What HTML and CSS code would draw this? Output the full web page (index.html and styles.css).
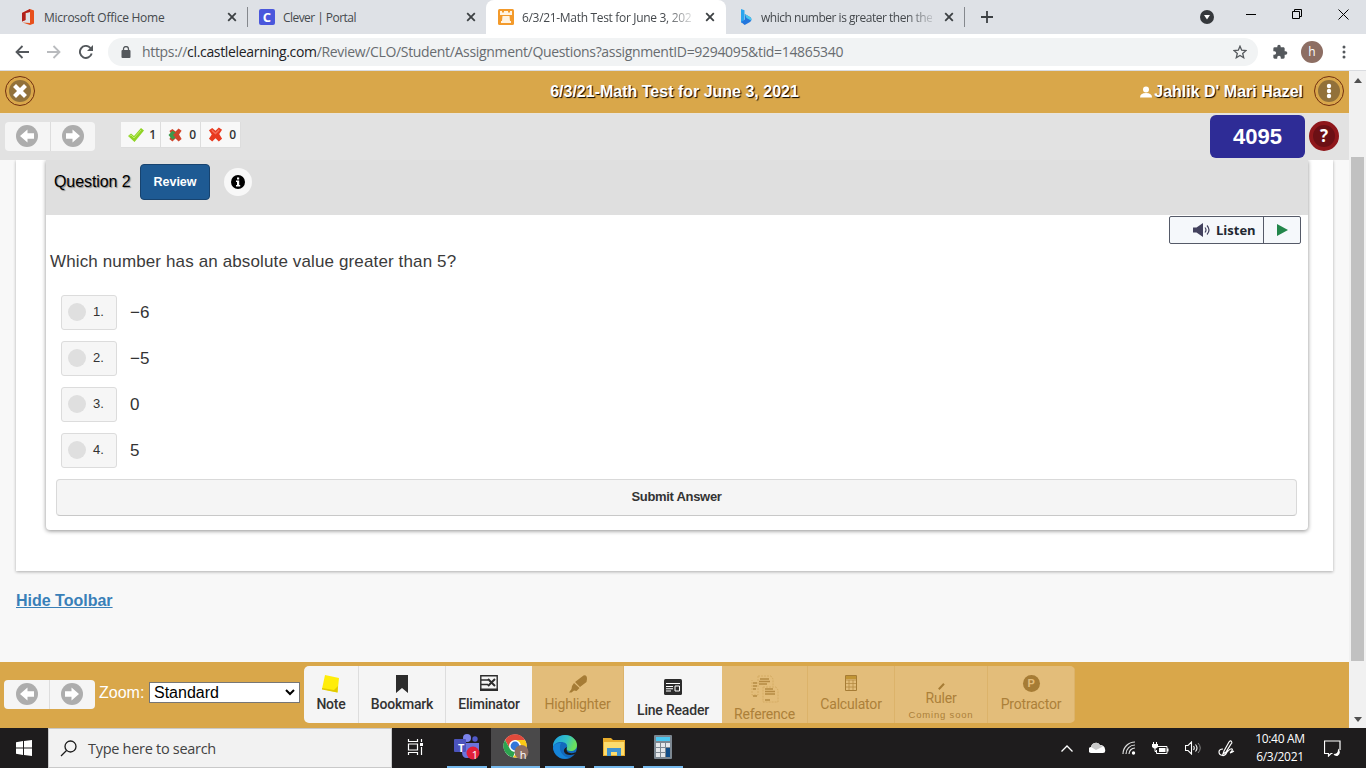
FILE: index.html
```html
<!DOCTYPE html>
<html lang="en">
<head>
  <meta charset="UTF-8">
  <meta name="viewport" content="width=device-width, initial-scale=1.0">
  <title>6/3/21-Math Test for June 3, 2021</title>
  <link rel="stylesheet" href="styles.css">
</head>
<body>
  <svg class="defs" width="0" height="0">
    <symbol id="close" viewBox="0 0 10 10"><path d="M1.2 1.2l7.6 7.6M8.8 1.2L1.2 8.8" stroke="#3c4043" stroke-width="1.8"/></symbol>
    <symbol id="arrow" viewBox="0 0 22 22">
      <circle cx="11" cy="11" r="11" fill="#adadad"/>
      <path d="M4 11l7.500-6.500V8.300H18v5.400h-6.500v3.800z" fill="#fff"/>
    </symbol>
    <symbol id="cross" viewBox="0 0 16 16"><path d="M1 3.500L4.500 1 8 4l3.500-3.500L15 3l-3 4.500 3 5-3.500 3L8 12l-3.500 3.500L1 12.500l3-4.500z"/></symbol>
  </svg>

  <div class="tabs">
    <div class="tab">
      <svg width="16" height="16" viewBox="0 0 16 16"><path d="M10 0l4 1.500v13L10 16l-7.500-2.500L10 14V3L5.500 4v7L2 12.500V4z" fill="#e8501c"/><path d="M10 0L2 4v8.500L5.500 11V4L10 3z" fill="#b0201c"/></svg>
      <span class="name office">Microsoft Office Home</span>
      <svg class="x" width="10" height="10"><use href="#close"/></svg>
    </div>
    <div class="tab second">
      <span class="clever">C</span>
      <span class="name clever-name">Clever | Portal</span>
      <svg class="x" width="10" height="10"><use href="#close"/></svg>
    </div>
    <div class="tab active">
      <svg width="16" height="16" viewBox="0 0 16 16"><rect width="16" height="16" rx="1.500" fill="#f39a2b"/><path d="M2 2h2v1.500h2V2h4v1.500h2V2h2v4H2zM4.500 7h7l.5 5h1v2H3v-2h1z" fill="#fff3e2"/></svg>
      <span class="name math fade">6/3/21-Math Test for June 3, 202</span>
      <svg class="x" width="10" height="10"><use href="#close"/></svg>
    </div>
    <div class="tab bing">
      <svg width="16" height="16" viewBox="0 0 16 16"><path d="M3 0l3.500 1.200V11L3 14z" fill="#2aa5ee"/><path d="M3 13l4-2.500L6.800 5l5.200 3c2.200 1.500 1.700 4 0 5l-5.300 3z" fill="#2376dd"/><path d="M6.800 5l5.200 3c1.500 1 1.500 2.500 1 3.500L8.500 9z" fill="#4bc8ed"/></svg>
      <span class="name which fade">which number is greater then the</span>
      <svg class="x" width="10" height="10"><use href="#close"/></svg>
    </div>
    <svg class="plus" width="12" height="12" viewBox="0 0 12 12"><path d="M6 0v12M0 6h12" stroke="#3c4043" stroke-width="1.800"/></svg>
    <div class="window-buttons">
      <svg width="14" height="14" viewBox="0 0 14 14"><circle cx="7" cy="7" r="7" fill="#35383c"/><path d="M4 5h6L7 9.500z" fill="#fff"/></svg>
      <svg class="min" width="10" height="10" viewBox="0 0 10 10"><path d="M0 4.500h10" stroke="#000"/></svg>
      <svg class="max" width="10" height="10" viewBox="0 0 10 10"><path d="M.5 2.500h7v7h-7zM2.500 2.500v-2h7v7h-2" fill="none" stroke="#000"/></svg>
      <svg class="quit" width="11" height="11" viewBox="0 0 11 11"><path d="M.5.5l10 10M10.500.5l-10 10" stroke="#000"/></svg>
    </div>
  </div>

  <div class="address-bar">
    <svg class="nav" width="14" height="14" viewBox="0 0 14 14"><path d="M14 7H1.500M7.500 1l-6 6 6 6" fill="none" stroke="#54585c" stroke-width="1.800"/></svg>
    <svg class="nav" width="14" height="14" viewBox="0 0 14 14"><path d="M0 7h12.500M6.500 1l6 6-6 6" fill="none" stroke="#b9bbbe" stroke-width="1.800"/></svg>
    <svg class="nav" width="14" height="14" viewBox="0 0 14 14"><path d="M12.700 8.500A6 6 0 1 1 11.300 2.800L13 4.500" fill="none" stroke="#54585c" stroke-width="1.900"/><path d="M14 0v6H8z" fill="#54585c"/></svg>
    <div class="omnibox">
      <svg width="10" height="12" viewBox="0 0 10 12"><rect x="0.500" y="4" width="9" height="8" rx="1" fill="#54585c"/><path d="M2.500 4.500V3a2.500 2.500 0 0 1 5 0v1.500" fill="none" stroke="#54585c" stroke-width="1.300"/></svg>
      <span class="url">https://<b>cl.castlelearning.com</b>/Review/CLO/Student/Assignment/Questions?assignmentID=9294095&amp;tid=14865340</span>
      <svg class="star" width="14" height="14" viewBox="0 0 14 14"><path d="M7 1.200l1.700 4 4.300.4-3.300 2.800 1 4.300L7 10.400l-3.700 2.300 1-4.300L1 5.600l4.300-.4z" fill="none" stroke="#54585c" stroke-width="1.300"/></svg>
    </div>
    <svg class="puzzle" width="16" height="16" viewBox="0 0 24 24"><path d="M20.500 11H19V7c0-1.100-.9-2-2-2h-4V3.500a2.500 2.500 0 0 0-5 0V5H4a2 2 0 0 0-2 2v3.800h1.500a2.700 2.700 0 0 1 0 5.400H2V20c0 1.100.9 2 2 2h3.800v-1.500a2.700 2.700 0 0 1 5.400 0V22H17a2 2 0 0 0 2-2v-4h1.500a2.500 2.500 0 0 0 0-5z" fill="#54585c"/></svg>
    <span class="avatar">h</span>
    <svg width="4" height="14" viewBox="0 0 4 14" fill="#54585c"><circle cx="2" cy="2" r="1.500"/><circle cx="2" cy="7" r="1.500"/><circle cx="2" cy="12" r="1.500"/></svg>
  </div>

  <div class="viewport">
    <div class="page">
      <div class="header">
        <div class="ring"><svg width="22" height="22" viewBox="0 0 22 22"><circle cx="11" cy="11" r="11" fill="#92713a"/><path d="M7 7l8 8M15 7l-8 8" stroke="#fff" stroke-width="4.200" stroke-linecap="square"/></svg></div>
        <h1>6/3/21-Math Test for June 3, 2021</h1>
        <div class="user">
          <svg width="12" height="12" viewBox="0 0 12 12"><circle cx="6" cy="3.500" r="3" fill="#fff"/><path d="M0 11.500c0-3 2-4.500 6-4.500s6 1.500 6 4.500z" fill="#fff"/></svg>
          <span>Jahlik D' Mari Hazel</span>
          <div class="ring"><svg width="22" height="22" viewBox="0 0 22 22"><circle cx="11" cy="11" r="11" fill="#92713a"/><g fill="#fff"><circle cx="11" cy="6" r="2.200"/><circle cx="11" cy="11" r="2.200"/><circle cx="11" cy="16" r="2.200"/></g></svg></div>
        </div>
      </div>

      <div class="subheader">
        <div class="arrows">
          <span><svg width="22" height="22"><use href="#arrow"/></svg></span>
          <span><svg class="flip" width="22" height="22"><use href="#arrow"/></svg></span>
        </div>
        <div class="scores">
          <span><svg width="16" height="14" viewBox="0 0 16 14"><path d="M0 8l3-2.500 3 2.500 7-8 3 2.500L6.500 14z" fill="#8fd325"/><path d="M1.500 8L3 7l3 3 7-8" fill="none" stroke="#c0ee68"/></svg>1</span>
          <span><svg width="15" height="14" viewBox="0 0 16 16"><use href="#cross" fill="#d0452b"/><path d="M0 8l4.500-5L8 5 7 8l1 3-3.500 2.500z" fill="#3d9a4b"/><path d="M6 7l6 6" stroke="#d0452b" stroke-width="2.500"/></svg>0</span>
          <span><svg width="15" height="15" viewBox="0 0 16 16"><use href="#cross" fill="#e83a1f"/><path d="M4 3.500l4 3.500 4-4" fill="none" stroke="#f5705a" stroke-width="1.500"/></svg>0</span>
        </div>
        <div class="code">4095</div>
        <div class="help">?</div>
      </div>

      <div class="content">
        <div class="sheet">
          <div class="question">
            <div class="question-head">
              <span class="number">Question 2</span>
              <span class="review">Review</span>
              <span class="info"><svg width="14" height="14" viewBox="0 0 14 14"><circle cx="7" cy="7" r="7" fill="#000"/><path d="M6 2.500h2.200v2H6zM5 5.500h3.200v4.500H9.200v1.500H5V10h1V7H5z" fill="#fff"/></svg></span>
            </div>
            <div class="listen">
              <span class="speak"><svg width="18" height="14" viewBox="0 0 18 14"><path d="M0 4.500h3.500L10 0v14L3.500 9.500H0z" fill="#43425e"/><path d="M12 4.500q2 2.500 0 5M14 2.500q4 4.500 0 9" fill="none" stroke="#43425e" stroke-width="1.200"/></svg>Listen</span>
              <span class="play"><svg width="11" height="12" viewBox="0 0 11 12"><path d="M0 0l11 6-11 6z" fill="#22864a"/></svg></span>
            </div>
            <p class="prompt">Which number has an absolute value greater than 5?</p>
            <div class="answers">
              <div class="answer"><span class="choice"><i></i>1.</span>−6</div>
              <div class="answer"><span class="choice"><i></i>2.</span>−5</div>
              <div class="answer"><span class="choice"><i></i>3.</span>0</div>
              <div class="answer"><span class="choice"><i></i>4.</span>5</div>
            </div>
            <div class="submit">Submit Answer</div>
          </div>
        </div>
        <a class="hide" href="#">Hide Toolbar</a>
      </div>

      <div class="footer">
        <div class="arrows">
          <span><svg width="22" height="22"><use href="#arrow"/></svg></span>
          <span><svg class="flip" width="22" height="22"><use href="#arrow"/></svg></span>
        </div>
        <span class="zoom-label">Zoom:</span>
        <div class="select">Standard<svg width="10" height="7" viewBox="0 0 10 7"><path d="M1 1l4 4 4-4" fill="none" stroke="#000" stroke-width="2"/></svg></div>
        <div class="tools">
          <div class="tool note"><svg width="18" height="18" viewBox="0 0 18 18"><path d="M3 0l14 3-1.500 14.500L0 14z" fill="#ffed0a"/><path d="M0 13l12 2 4-4-.5 6.500L0 14.500z" fill="#e2ca00"/></svg>Note</div>
          <div class="tool bookmark"><svg width="12" height="18" viewBox="0 0 12 18"><path d="M0 0h12v18l-6-5-6 5z" fill="#2c2c2c"/></svg>Bookmark</div>
          <div class="tool eliminator"><svg width="18" height="16" viewBox="0 0 18 16"><path d="M.8.8h16.400v14H.8zM1 5h7M1 9.500h7" fill="none" stroke="#2c2c2c" stroke-width="1.400"/><path d="M8 4l7 7M15 4l-7 7" stroke="#2c2c2c" stroke-width="2"/><path d="M0 13.500h18V16H0z" fill="#2c2c2c"/></svg>Eliminator</div>
          <div class="tool highlighter off"><svg width="18" height="18" viewBox="0 0 18 18"><path d="M14.500.5q3.500-1 3.500 3.500l-.5 3-6.500 5-5-5zM5 8l5.500 5-3 3-2.500-.5-2.500 2H0l2.500-3.500L3 11z" fill="#a67c35"/></svg>Highlighter</div>
          <div class="tool reader"><svg width="18" height="16" viewBox="0 0 18 16"><rect width="18" height="16" rx="1.500" fill="#2c2c2c"/><path d="M2 4.500h14M2 7.500h7M2 9.800h7M2 12h5" stroke="#fff" stroke-width="1.100"/><path d="M11 7h4.500v5H11z" fill="#2c2c2c" stroke="#fff"/></svg>Line Reader</div>
          <div class="tool reference off"><svg width="28" height="28" viewBox="0 0 28 28" fill="none" stroke="#b58a43"><path d="M7 1h13l2 3v7M7 1v19H1V5M12 12h13l2 3v12H12z" stroke="#d5ac64" stroke-dasharray="2 1"/><path d="M9 4h9M8 6.500h11M8 9h8M14 14h8M14 16.500h10M14 19h10M2 8h4M2 11h4M2 14h3M2 21h4M14 25h5" stroke-width="1.300"/></svg>Reference</div>
          <div class="tool calculator off"><svg width="12" height="16" viewBox="0 0 12 16"><path d="M.5.5h11v15H.5z" fill="none" stroke="#a67c35"/><path d="M1 1h10v3H1z" fill="#c29535"/><path d="M1 5h10M1 8.500h10M1 12h10M4 5v10M8 5v10" stroke="#b58a43" stroke-width=".8"/></svg>Calculator</div>
          <div class="tool ruler off"><svg width="7" height="7" viewBox="0 0 7 7"><path d="M.8 6.200L6 .8" stroke="#a67c35" stroke-width="2"/></svg>Ruler<small>Coming soon</small></div>
          <div class="tool protractor off"><span class="p">P</span>Protractor</div>
        </div>
      </div>
    </div>
    <div class="scrollbar">
      <svg width="8" height="5" viewBox="0 0 8 5"><path d="M0 5l4-5 4 5z" fill="#505050"/></svg>
      <div class="thumb"></div>
      <svg class="down" width="8" height="5" viewBox="0 0 8 5"><path d="M0 0l4 5 4-5z" fill="#505050"/></svg>
    </div>
  </div>

  <div class="taskbar">
    <div class="start"><svg width="16" height="16" viewBox="0 0 16 16"><path d="M0 2.200L7 1v6.500H0zM8 .9L16 0v7.500H8zM0 8.500h7V15l-7-1.200zM8 8.500h8V16l-8-1.100z" fill="#fff"/></svg></div>
    <div class="search"><svg width="17" height="17" viewBox="0 0 17 17"><circle cx="10.500" cy="6.500" r="5.500" fill="none" stroke="#1b1b1b" stroke-width="1.300"/><path d="M6.500 10.500L1 16" stroke="#1b1b1b" stroke-width="1.300"/></svg>Type here to search</div>
    <div class="app view"><svg width="17" height="16" viewBox="0 0 17 16"><path d="M1.500 0v2.500h9V0M1.500 16v-2.500h9V16M1.500 5h9v6h-9zM14.500 0v3M14.500 8v8" fill="none" stroke="#fff" stroke-width="1.200"/><path d="M13 4h3v3h-3z" fill="#fff"/></svg></div>
    <div class="app open teams"><svg width="28" height="26" viewBox="0 0 28 26"><circle cx="14" cy="4" r="4" fill="#7b83eb"/><circle cx="22" cy="5" r="2.700" fill="#5059c9"/><path d="M9 9h11v9q-1 6-6 6t-5-6zM20 9h6v9q-2 3-6 2z" fill="#6c73dc"/><rect x="1" y="5" width="12" height="13" rx="1" fill="#4b53bc"/><circle cx="20" cy="19" r="6.500" fill="#e11f39"/></svg><b>T</b><span class="badge">1</span></div>
    <div class="app open chrome"><svg width="26" height="26" viewBox="0 0 26 26"><circle cx="12" cy="12" r="11.500" fill="#fff"/><path d="M2 6a11.500 11.500 0 0 1 20 0H12a6 6 0 0 0-5.500 8z" fill="#e04a3b"/><path d="M2 6l5 9a6 6 0 0 0 5 3l-2 5.300A11.500 11.500 0 0 1 2 6z" fill="#2da34f"/><path d="M12 6h10a11.500 11.500 0 0 1-12 17.300L17 15a6 6 0 0 0-5-9z" fill="#fbc915"/><circle cx="12" cy="12" r="5.500" fill="#fff"/><circle cx="12" cy="12" r="4.400" fill="#3277da"/><circle cx="18.500" cy="18" r="7" fill="#8d6e63"/></svg><span class="badge">h</span></div>
    <div class="app open"><svg width="24" height="24" viewBox="0 0 24 24"><defs><linearGradient id="edge" x1="0" y1="0" x2="1" y2="0.300"><stop offset="0" stop-color="#1b9de2"/><stop offset="0.600" stop-color="#34c1c5"/><stop offset="1" stop-color="#6be05c"/></linearGradient></defs><circle cx="12" cy="12" r="12" fill="#1269bd"/><path d="M0 10C1 4 6 0 12 0c7 0 12 5 12 10 0 4-3 6-6 6s-5-1-4-3c1-4-2-6-6-6-4 0-7 2-8 5z" fill="url(#edge)"/><path d="M14 12c-2 5 3 8 9 5l-1 2c-9 4-15-4-8-7z" fill="#1c1b1c"/><path d="M8 8c-3 6 0 13 8 15-8 3-15-3-16-10 1-4 4-5 8-5z" fill="#1684d8"/></svg></div>
    <div class="app open"><svg width="22" height="20" viewBox="0 0 22 20"><path d="M0 1h8l2 2h12v16H0z" fill="#e9ad2c"/><path d="M1 5h20v13H1z" fill="#fcdc6e"/><path d="M4 11h14v8h-4v-4H8v4H4z" fill="#4193cf"/></svg></div>
    <div class="app open"><svg width="18" height="24" viewBox="0 0 18 24"><rect width="18" height="24" rx="1" fill="#7c8791"/><path d="M2 2h14v4H2z" fill="#4bc7f1"/><path d="M2 8h4v4H2zM7 8h4v4H7zM12 8h4v4h-4zM2 13h4v4H2zM7 13h4v4H7zM2 18h4v4H2zM7 18h4v4H7z" fill="#e4e7ea"/><path d="M12 13h4v9h-4z" fill="#104d88"/></svg></div>
    <div class="tray">
      <svg width="12" height="7" viewBox="0 0 12 7"><path d="M.5 6.500L6 1l5.500 5.500" fill="none" stroke="#fff" stroke-width="1.300"/></svg>
      <svg width="17" height="12" viewBox="0 0 17 12"><path d="M3 11a3 3 0 0 1-1-6 5 5 0 0 1 9-2 4.500 4.500 0 0 1 5 4q1 4-2 4z" fill="#fff"/><path d="M2 5a5 5 0 0 1 9-2l3 1.500L7 8z" fill="#c9c9c9"/></svg>
      <svg width="14" height="14" viewBox="0 0 14 14"><path d="M1 13A12 12 0 0 1 13 1M4 13a9 9 0 0 1 9-9M7 13a6 6 0 0 1 6-6" fill="none" stroke="#ddd" stroke-width="1.200"/><circle cx="11.500" cy="12" r="1.700" fill="#fff"/></svg>
      <svg width="17" height="13" viewBox="0 0 17 13"><path d="M5.500 4.500H15v7H4.500V8" fill="none" stroke="#fff"/><path d="M7 6h6.500v4H7zM15 6.500h1.500v3H15zM0 2h6v3L4 6.500H2L0 5zM1 0h1v2H1zM4 0h1v2H4z" fill="#fff"/><path d="M3 6v3.500h2" fill="none" stroke="#fff"/></svg>
      <svg width="17" height="14" viewBox="0 0 17 14"><path d="M.5 4.500H3L6.500 1v12L3 9.500H.5zM8.500 5q1.500 2 0 4M10.500 3.500q3 3.500 0 7" fill="none" stroke="#fff" stroke-width="1.100"/><path d="M13 2q4.500 5 0 10" fill="none" stroke="#888"/></svg>
      <svg width="17" height="17" viewBox="0 0 17 17"><path d="M6 11l5-9q1.500-2 2.500-.5T13 4l-5 8-3 2zM5 9Q1 9 1 12t3.500 3.500 5-5.500M9 12q4-4 5-3t-1 3 3-1" fill="none" stroke="#fff" stroke-width="1.200"/></svg>
    </div>
    <div class="clock"><span>10:40 AM</span><span>6/3/2021</span></div>
    <svg class="action" width="17" height="17" viewBox="0 0 17 17"><path d="M8.500 13.500H7L4.500 16v-2.500H.5V1h15.500v9" fill="none" stroke="#fff" stroke-width="1.200"/><path d="M14 8.500q4 4-.5 7.500-3 .5-4-2 5 0 4.500-5.500z" fill="#fff"/></svg>
  </div>
</body>
</html>
```
FILE: styles.css
```css
* {
  box-sizing: border-box;
}

body {
  margin: 0;
  width: 1366px;
  height: 768px;
  overflow: hidden;
  display: flex;
  flex-direction: column;
  font-family: "Liberation Sans", Arial, sans-serif;
  color: #333;
}

svg {
  display: block;
  flex: none;
}

.defs {
  position: absolute;
}

/* browser */
.tabs {
  display: flex;
  height: 34px;
  flex: none;
  background: #dee1e6;
  font-family: "Open Sans", sans-serif;
  font-size: 12px;
  color: #45494d;
}

.tab {
  display: flex;
  align-items: center;
  width: 239px;
  padding: 0 10px 0 12px;
}

.tab:first-child {
  width: 248px;
  padding: 0 10px 0 20px;
  border-right: 1px solid #85888d;
  height: 20px;
  margin-top: 7px;
}

.second {
  width: 238px;
  padding-left: 11px;
}

.active {
  width: 240px;
  background: #fff;
  border-radius: 8px 8px 0 0;
  padding-right: 11px;
}

.bing {
  height: 20px;
  margin-top: 7px;
  border-right: 1px solid #85888d;
}

.name {
  white-space: nowrap;
  margin-left: 8px;
}

.office {
  letter-spacing: -0.27px;
}

.clever-name {
  letter-spacing: -0.55px;
}

.math {
  letter-spacing: -0.32px;
}

.which {
  margin-left: 7px;
  letter-spacing: -0.48px;
}

.fade {
  -webkit-mask-image: linear-gradient(to right, #000 85%, rgba(0, 0, 0, 0.2));
  mask-image: linear-gradient(to right, #000 85%, rgba(0, 0, 0, 0.2));
}

.x {
  margin-left: auto;
}

.clever {
  width: 16px;
  height: 16px;
  border-radius: 2px;
  background: #4a57dc;
  color: #fff;
  font-weight: bold;
  font-size: 13px;
  line-height: 16px;
  text-align: center;
}

.plus {
  margin: 11px 0 0 16px;
}

.window-buttons {
  display: flex;
  margin-left: auto;
  padding: 10px 17px 0 0;
}

.min {
  margin-left: 32px;
}

.max {
  margin: -1px 0 0 36px;
}

.quit {
  margin: -1px 0 0 36px;
}

.address-bar {
  display: flex;
  align-items: center;
  height: 37px;
  flex: none;
  padding: 0 19px 1px 15px;
  border-bottom: 1px solid #dadce0;
  background: #fff;
}

.nav {
  margin-right: 18px;
}

.nav + .nav + .nav {
  margin-right: 15px;
}

.omnibox {
  display: flex;
  align-items: center;
  width: 1150px;
  height: 28px;
  border-radius: 14px;
  background: #f1f3f4;
  padding: 0 11px 0 13px;
}

.url {
  margin-left: 11px;
  font-family: "Open Sans", sans-serif;
  font-size: 14px;
  letter-spacing: -0.33px;
  color: #686c70;
}

.url b {
  font-weight: normal;
  color: #202124;
}

.star {
  margin-left: auto;
}

.puzzle {
  margin: 0 13px 0 14px;
}

.avatar {
  width: 22px;
  height: 22px;
  margin-right: 19px;
  border-radius: 50%;
  background: #8d6e63;
  color: #fff;
  font: 12px/22px "Open Sans", sans-serif;
  text-align: center;
}

/* page */
.viewport {
  display: flex;
  height: 657px;
  flex: none;
}

.page {
  width: 1349px;
  display: flex;
  flex-direction: column;
  background: #f8f8f8;
}

.header {
  display: grid;
  grid-template-columns: 1fr auto 1fr;
  align-items: center;
  height: 42px;
  padding: 0 5px;
  background: #d9a74a;
  color: #fff;
  text-shadow: 1px 1px 1px #000;
}

.header h1 {
  margin: 0;
  font-size: 16px;
  line-height: 20px;
}

.ring {
  width: 30px;
  height: 30px;
  border: 1px solid #722f10;
  border-radius: 50%;
  padding: 3px;
  margin-bottom: 2px;
}

.user {
  display: flex;
  align-items: center;
  justify-content: flex-end;
  font-size: 16px;
  font-weight: bold;
}

.user span {
  margin: 0 11px 0 2px;
}

.subheader {
  display: flex;
  align-items: flex-start;
  height: 47px;
  padding: 2px 10px 0 5px;
  border-top: 1px solid #e8e4dc;
  background: #e2e2e2;
}

.arrows {
  display: flex;
  width: 90px;
  height: 29px;
  border-radius: 4px;
  background: #f5f5f5;
}

.arrows span {
  width: 45px;
  padding: 3px 0 0 11px;
}

.arrows span + span {
  border-left: 1px solid #ddd;
}

.flip {
  transform: scaleX(-1);
}

.subheader .arrows {
  margin-top: 6px;
}

.scores {
  display: flex;
  margin: 6px auto 0 26px;
}

.scores span {
  display: flex;
  align-items: center;
  justify-content: space-between;
  width: 40px;
  height: 26px;
  padding: 0 4px 0 7px;
  border-right: 1px solid #ddd;
  border-bottom: 1px solid #ddd;
  background: #f8f8f8;
  font: 600 12px "Open Sans", sans-serif;
}

.code {
  width: 95px;
  height: 43px;
  margin-top: -1px;
  border-radius: 6px;
  background: #2e2c96;
  color: #fff;
  font-size: 22px;
  font-weight: bold;
  line-height: 43px;
  text-align: center;
}

.help {
  width: 30px;
  height: 30px;
  margin: 5px 0 0 4px;
  border: 4px solid #8f171b;
  border-radius: 50%;
  background: #6c1015;
  color: #fff;
  font: bold 17px/22px "Open Sans", sans-serif;
  text-align: center;
}

.content {
  height: 502px;
  padding: 0 16px;
}

.sheet {
  height: 411px;
  padding: 0 25px 0 30px;
  background: #fff;
  box-shadow: 0 1px 3px rgba(0, 0, 0, 0.3);
  clip-path: inset(0 -4px -5px -4px);
}

.question {
  height: 370px;
  background: #fff;
  border-radius: 0 0 4px 4px;
  box-shadow: 0 1px 4px rgba(0, 0, 0, 0.45);
  clip-path: inset(0 -5px -6px -5px);
}

.question-head {
  display: flex;
  align-items: center;
  height: 55px;
  padding: 0 8px 11px;
  background: #dfdfdf;
}

.number {
  width: 86px;
  padding-bottom: 1px;
  font-size: 16px;
  letter-spacing: -0.08px;
  color: #000;
  text-shadow: 1px 1px 1px rgba(0, 0, 0, 0.4);
}

.review {
  width: 70px;
  height: 36px;
  border: 1px solid #17436f;
  border-radius: 4px;
  background: #1e5a93;
  color: #fff;
  font-size: 12.500px;
  font-weight: bold;
  line-height: 34px;
  text-align: center;
}

.info {
  width: 28px;
  height: 28px;
  margin-left: 14px;
  padding: 7px;
  border-radius: 50%;
  background: #f8f8f8;
}

.listen {
  display: flex;
  width: 132px;
  height: 28px;
  margin: 1px 7px 0 auto;
  border: 1px solid #555a68;
  border-radius: 2px;
  background: #f5f8fb;
  font: bold 13px "Open Sans", sans-serif;
  color: #222831;
}

.speak {
  display: flex;
  align-items: center;
  width: 93px;
  padding-left: 23px;
  gap: 5px;
}

.play {
  display: flex;
  align-items: center;
  flex: 1;
  padding-left: 13px;
  border-left: 1px solid #555a68;
}

.prompt {
  margin: 8px 0 0 4px;
  font-size: 17px;
  line-height: 20px;
  letter-spacing: 0.13px;
  color: #3b3b3b;
}

.answers {
  display: grid;
  gap: 11px;
  padding: 23px 0 0 15px;
}

.answer {
  display: flex;
  align-items: center;
  gap: 13px;
  height: 35px;
  font-size: 17px;
  line-height: 38px;
}

.choice {
  display: flex;
  align-items: center;
  width: 56px;
  height: 35px;
  padding: 0 0 1px 6px;
  border: 1px solid #dcdcdc;
  border-radius: 3px;
  background: #f6f6f6;
  font-size: 13px;
}

.choice i {
  width: 18px;
  height: 18px;
  margin-right: 7px;
  border-radius: 50%;
  background: #dfdfdf;
}

.submit {
  height: 37px;
  margin: 11px 11px 0 10px;
  border: 1px solid #d9d9d9;
  border-bottom-color: #c8c8c8;
  border-radius: 4px;
  background: #f5f5f5;
  font-size: 13px;
  font-weight: bold;
  line-height: 34px;
  letter-spacing: -0.3px;
  text-align: center;
}

.hide {
  display: block;
  margin-top: 20px;
  width: fit-content;
  font-size: 16px;
  font-weight: bold;
  line-height: 20px;
  color: #3980b8;
}

.footer {
  display: flex;
  height: 66px;
  padding: 4px 0 0 4px;
  background: #d9a74a;
}

.footer .arrows {
  width: 91px;
  margin-top: 14px;
}

.footer .arrows span {
  padding-left: 12px;
}

.footer .arrows span + span {
  padding-left: 11px;
}

.zoom-label {
  width: 50px;
  margin: 18px 0 0 4px;
  color: #fff;
  font-size: 16px;
}

.select {
  display: flex;
  align-items: center;
  justify-content: space-between;
  width: 151px;
  height: 21px;
  margin: 16px 4px 0 0;
  padding: 0 4px;
  border: 1px solid #767676;
  background: #fff;
  color: #000;
  font-size: 16px;
}

.tools {
  display: flex;
  height: 57px;
  border-radius: 5px;
  overflow: hidden;
  font-family: Roboto, sans-serif;
  font-size: 14px;
  letter-spacing: -0.2px;
  font-weight: 500;
  color: #333;
}

.tool {
  display: flex;
  flex-direction: column;
  align-items: center;
  padding-top: 9px;
  border-right: 1px solid #ddd;
  background: #f5f5f5;
  line-height: 16px;
}

.tool svg {
  margin-bottom: 3px;
}

.note { width: 55px; }
.bookmark { width: 87px; }
.eliminator { width: 86px; border-right: none; }
.highlighter { width: 92px; }
.reader { width: 98px; border-right: none; }
.reference { width: 86px; }
.calculator { width: 87px; }
.ruler { width: 93px; }
.protractor { width: 87px; }

.tool.off {
  background: #e3bd7a;
  border-color: #dcb36a;
  color: #ac8039;
  font-weight: 400;
}

.tool.eliminator svg,
.tool.calculator svg {
  margin-bottom: 5px;
}

.tool.reader {
  padding-top: 13px;
}

.tool.reader svg {
  margin-bottom: 7px;
}

.tool.ruler {
  padding-top: 17px;
}

.tool.ruler svg {
  margin-bottom: 0;
}

.ruler small {
  font-family: "Liberation Sans", Arial, sans-serif;
  font-size: 9.500px;
  letter-spacing: 0.800px;
  line-height: 18px;
}

.p {
  width: 17px;
  height: 17px;
  margin-bottom: 4px;
  border-radius: 50%;
  background: #a67c35;
  color: #e3bd7a;
  font: bold 11px/17px "Liberation Sans", Arial, sans-serif;
  text-align: center;
}

.scrollbar {
  display: flex;
  flex-direction: column;
  align-items: center;
  width: 17px;
  padding: 7px 0 6px;
  background: #f1f1f1;
}

.thumb {
  width: 13px;
  height: 504px;
  margin-top: 74px;
  background: #c1c1c1;
}

.down {
  margin-top: auto;
}

/* windows */
.taskbar {
  display: flex;
  align-items: center;
  height: 40px;
  flex: none;
  padding-right: 25px;
  background: #1e1c1d;
  color: #fff;
  font-family: "Open Sans", sans-serif;
}

.start {
  width: 48px;
  padding-left: 16px;
}

.search {
  display: flex;
  align-items: center;
  gap: 11px;
  width: 344px;
  height: 40px;
  padding-left: 11px;
  border: 1px solid #c9c9c9;
  background: #f2f2f2;
  color: #424242;
  font-size: 14.500px;
  letter-spacing: -0.29px;
}

.app {
  position: relative;
  display: flex;
  align-items: center;
  justify-content: center;
  width: 49px;
  height: 40px;
  padding: 0 4px 2px;
}

.app svg {
  margin: auto;
}

.view {
  width: 50px;
  padding-right: 8px;
}

.app.open::after {
  content: "";
  position: absolute;
  left: 5px;
  right: 4px;
  bottom: 0;
  height: 2px;
  background: #76b9ed;
}

.teams b {
  position: absolute;
  left: 16px;
  top: 12px;
  font-size: 11px;
  line-height: 16px;
}

.badge {
  position: absolute;
  left: 27px;
  top: 19px;
  width: 10px;
  font-size: 11px;
  line-height: 16px;
  text-align: center;
}

.teams .badge {
  left: 28px;
}

.chrome {
  background: #4a494a;
}

.app.chrome::after {
  left: 0;
  right: 0;
}

.tray {
  display: flex;
  align-items: center;
  gap: 16px;
  margin-left: auto;
}

.clock {
  display: flex;
  flex-direction: column;
  align-items: center;
  width: 60px;
  margin: 0 14px 0 15px;
  font-size: 12px;
  line-height: 18px;
  letter-spacing: -0.300px;
  white-space: nowrap;
}
```
